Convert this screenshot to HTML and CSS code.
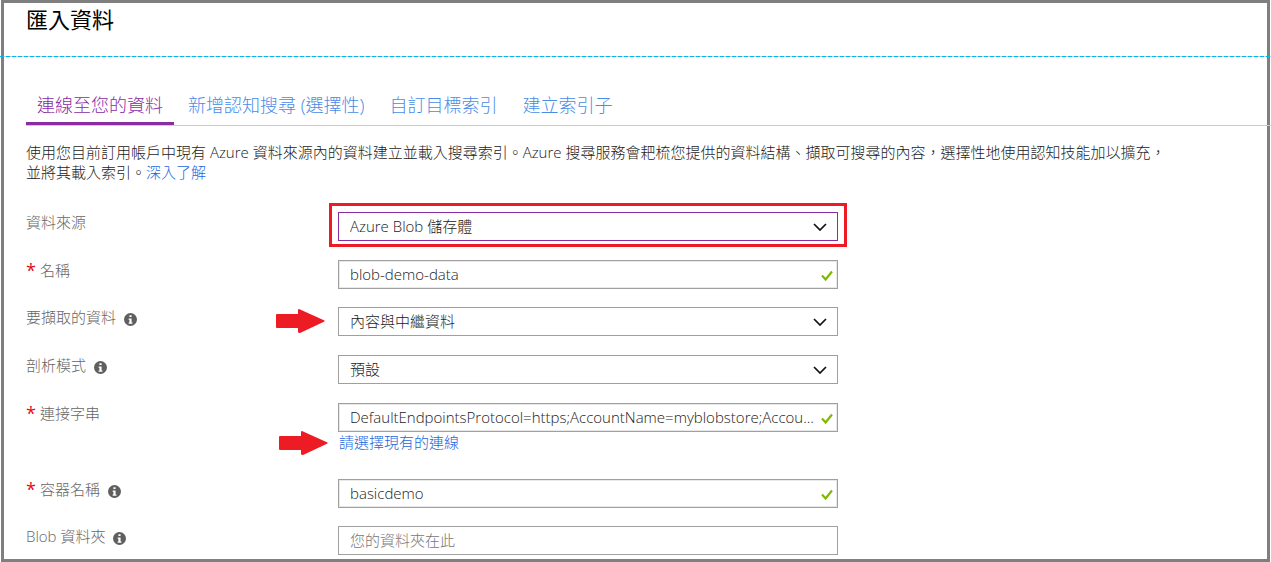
FILE: index.html
```html
<!DOCTYPE html>
<html lang="zh-Hant">
<head>
<meta charset="utf-8">
<meta name="viewport" content="width=device-width, initial-scale=1">
<title>匯入資料</title>
<link rel="stylesheet" href="styles.css">
</head>
<body>
<svg class="sprite" aria-hidden="true">
  <symbol id="chevron" viewBox="0 0 14 8"><path d="M1 1l6 6 6-6" fill="none" stroke="#111" stroke-width="1.7"/></symbol>
  <symbol id="check" viewBox="0 0 12 11"><path d="M1 5.500l3.600 4L11 1.500" fill="none" stroke="#7fba00" stroke-width="2.200"/></symbol>
  <symbol id="info" viewBox="0 0 12 12"><circle cx="6" cy="6" r="6" fill="#5f5f5f"/><path d="M5 2h2v1.800H5zM4.300 5H7v3.800h.8V10H4.300V8.800H5V6.200h-.7z" fill="#fff"/></symbol>
  <symbol id="arrow" viewBox="0 0 49 24"><path d="M1 5h21V1q0-1 1-1l25.500 11.500v1L24 24q-2 0-2-1v-4H1q-1 0-1-1V6q0-1 1-1z" fill="#ed1c24"/></symbol>
</svg>
<div class="frame">
  <header class="header"><h1 class="title">匯入資料</h1></header>
  <main class="content">
    <nav class="tabs">
      <a class="tab tab-active" href="#connect" aria-current="page">連線至您的資料</a>
      <a class="tab" href="#cognitive">新增認知搜尋 (選擇性)</a>
      <a class="tab" href="#index">自訂目標索引</a>
      <a class="tab" href="#indexer">建立索引子</a>
    </nav>
    <p class="intro">使用您目前訂用帳戶中現有 Azure 資料來源內的資料建立並載入搜尋索引。Azure 搜尋服務會耙梳您提供的資料結構、擷取可搜尋的內容，選擇性地使用認知技能加以擴充，<br>並將其載入索引。<a class="link" href="#more">深入了解</a></p>
    <form class="form">
      <div class="row">
        <label class="label" for="source">資料來源</label>
        <div class="field">
          <select class="control select select-focus" id="source"><option>Azure Blob 儲存體</option></select>
          <svg class="chevron"><use href="#chevron"/></svg>
          <span class="highlight"></span>
        </div>
      </div>
      <div class="row">
        <label class="label" for="name"><span class="star">*</span>名稱</label>
        <div class="field">
          <input class="control input" id="name" type="text" value="blob-demo-data">
          <svg class="check"><use href="#check"/></svg>
        </div>
      </div>
      <div class="row">
        <label class="label" for="extract">要擷取的資料<svg class="info"><use href="#info"/></svg></label>
        <div class="field">
          <svg class="arrow"><use href="#arrow"/></svg>
          <select class="control select" id="extract"><option>內容與中繼資料</option></select>
          <svg class="chevron"><use href="#chevron"/></svg>
        </div>
      </div>
      <div class="row">
        <label class="label" for="parse">剖析模式<svg class="info"><use href="#info"/></svg></label>
        <div class="field">
          <select class="control select" id="parse"><option>預設</option></select>
          <svg class="chevron"><use href="#chevron"/></svg>
        </div>
      </div>
      <div class="row">
        <label class="label" for="connection"><span class="star">*</span>連接字串</label>
        <div class="stack">
          <div class="field">
            <input class="control input" id="connection" type="text" value="DefaultEndpointsProtocol=https;AccountName=myblobstore;Accou...">
            <svg class="check"><use href="#check"/></svg>
          </div>
          <div class="field below">
            <svg class="arrow arrow-link"><use href="#arrow"/></svg>
            <a class="link" href="#existing">請選擇現有的連線</a>
          </div>
        </div>
      </div>
      <div class="row">
        <label class="label" for="container"><span class="star">*</span>容器名稱<svg class="info"><use href="#info"/></svg></label>
        <div class="field">
          <input class="control input" id="container" type="text" value="basicdemo">
          <svg class="check"><use href="#check"/></svg>
        </div>
      </div>
      <div class="row">
        <label class="label" for="folder">Blob 資料夾<svg class="info"><use href="#info"/></svg></label>
        <div class="field">
          <input class="control" id="folder" type="text" placeholder="您的資料夾在此">
        </div>
      </div>
    </form>
  </main>
</div>
</body>
</html>
```
FILE: styles.css
```css
* { box-sizing: border-box; }

body {
  margin: 0;
  background: #fff;
  color: #222;
  font: 300 15px/20px "Open Sans", "Noto Sans CJK TC", sans-serif;
}

.sprite { position: absolute; width: 0; height: 0; }

.frame {
  margin: 0 1px;
  border: 3px solid #7f7f7f;
}

.header {
  height: 54px;
  margin: 0 -4px;
  padding: 0 26px;
  background: repeating-linear-gradient(90deg, #00b7ef 0 4px, #c8d4da 4px 6px) bottom / 100% 1px no-repeat;
}

.title {
  margin: 0;
  color: #000;
  font-size: 22px;
  font-weight: 400;
  line-height: 32px;
}

.content { padding: 32px 0 4px 22px; }

.tabs {
  display: flex;
  gap: 3px;
  margin-right: -4px;
  border-bottom: 1px solid #ccc;
}

.tab {
  padding: 4px 11px 5px;
  border-bottom: 3px solid transparent;
  color: #4a8be8;
  font-size: 18px;
  line-height: 24px;
  text-decoration: none;
  white-space: nowrap;
}

.tab-active { border-bottom-color: #8a2da5; color: #8a2da5; }

.intro { margin: 16px 0 30px; }

.link { color: #1a66dd; text-decoration: none; }

.form { display: grid; gap: 18px; }

.row {
  display: grid;
  grid-template-columns: 312px minmax(0, 500px);
  align-items: start;
}

.label {
  display: flex;
  align-items: center;
  color: #666;
  line-height: 20px;
}

.star { width: 14px; color: #e00b1c; font-size: 18px; font-weight: 400; }

.info { width: 13px; height: 13px; margin: 5px 0 0 8px; }

.field { position: relative; }

.control {
  display: block;
  width: 100%;
  height: 29px;
  margin: 0;
  padding: 0 24px 2px 11px;
  border: 1px solid #a0a0a0;
  border-radius: 0;
  outline: 0;
  background: #fff;
  color: #222;
  font: inherit;
}

.control::placeholder { color: #777; opacity: 1; }

.input { box-shadow: inset 0 0 0 1px #e8e8e8; }

.select { margin-bottom: 1px; appearance: none; }

.select-focus { border-color: #8a2da5; }

.chevron {
  position: absolute;
  top: 11px;
  right: 11px;
  width: 14px;
  height: 8px;
  pointer-events: none;
}

.check {
  position: absolute;
  top: 10px;
  right: 5px;
  width: 12px;
  height: 11px;
}

.highlight {
  position: absolute;
  inset: -9px -9px -5px;
  border: 3px solid #ed1c24;
  pointer-events: none;
}

.arrow {
  position: absolute;
  top: 2px;
  left: -62px;
  width: 49px;
  height: 24px;
}

.arrow-link { top: -1px; left: -59px; }

.below { height: 29px; padding-left: 1px; }
```
